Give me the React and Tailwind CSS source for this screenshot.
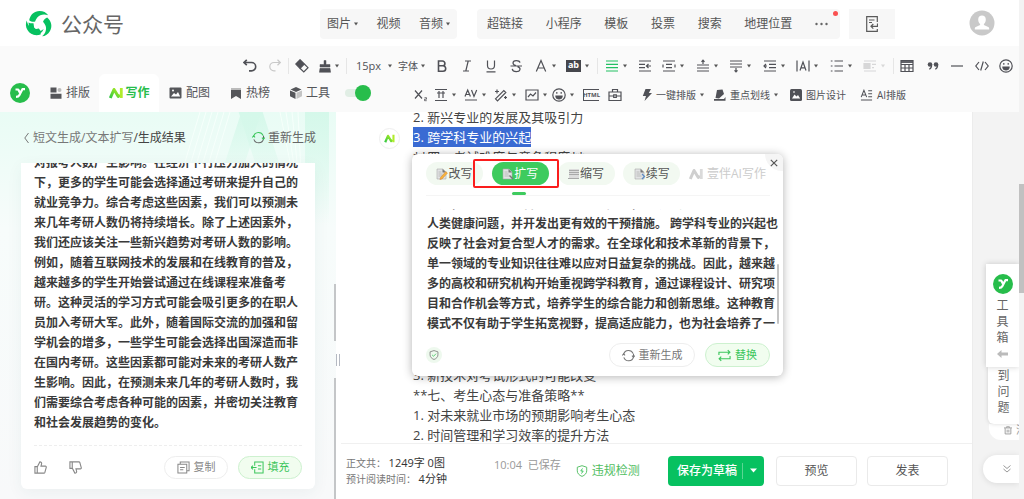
import { useState } from 'react';

const leftLines = [
    '对报考人数产生影响。在经济下行压力加大的情况',
    '下，更多的学生可能会选择通过考研来提升自己的',
    '就业竞争力。综合考虑这些因素，我们可以预测未',
    '来几年考研人数仍将持续增长。除了上述因素外，',
    '我们还应该关注一些新兴趋势对考研人数的影响。',
    '例如，随着互联网技术的发展和在线教育的普及，',
    '越来越多的学生开始尝试通过在线课程来准备考',
    '研。这种灵活的学习方式可能会吸引更多的在职人',
    '员加入考研大军。此外，随着国际交流的加强和留',
    '学机会的增多，一些学生可能会选择出国深造而非',
    '在国内考研。这些因素都可能对未来的考研人数产',
    '生影响。因此，在预测未来几年的考研人数时，我',
    '们需要综合考虑各种可能的因素，并密切关注教育',
    '和社会发展趋势的变化。',
];

const popupLines = [
    '例如，医学与人工智能学科的交叉融合，有助于更全面地理解',
    '人类健康问题，并开发出更有效的干预措施。 跨学科专业的兴起也',
    '反映了社会对复合型人才的需求。在全球化和技术革新的背景下，',
    '单一领域的专业知识往往难以应对日益复杂的挑战。因此，越来越',
    '多的高校和研究机构开始重视跨学科教育，通过课程设计、研究项',
    '目和合作机会等方式，培养学生的综合能力和创新思维。这种教育',
    '模式不仅有助于学生拓宽视野，提高适应能力，也为社会培养了一',
];

/* ---------- icons ---------- */

function Icon({ children, className = 'w-[14px] h-[14px]', box = '0 0 14 14', width = 1.2 }) {
    return (
        <svg className={`shrink-0 ${className}`} viewBox={box} fill="none" stroke="currentColor" strokeWidth={width} aria-hidden="true">
            {children}
        </svg>
    );
}

function Caret({ className = 'text-[#555]' }) {
    return (
        <svg className={`w-1 h-1 shrink-0 ${className}`} viewBox="0 0 4 4" aria-hidden="true">
            <path d="M0 .5h4L2 3.5z" fill="currentColor" />
        </svg>
    );
}

const swirlArm = 'M4.200 10.200C5.200 4.600 9.400 1 14.500 1c3.800 0 6.800 1.500 8.700 4.200-4.200-1.700-8.600-.6-10.900 2.200-1 1.200-1.800 2.600-2.200 4.200-2 .5-4.200-.1-5.900-1.400z';

function BrandLogo() {
    return (
        <svg className="w-7 h-7" viewBox="0 0 28 28" aria-hidden="true">
            <g fill="#07c160">
                <path d={swirlArm} />
                <path d={swirlArm} transform="rotate(120 14 14)" />
                <path d={swirlArm} transform="rotate(240 14 14)" />
                <path d="M3.500 12.500c2 1 3.500 1 5 .7l.6 4.300 3.400 3-4 3.500-4-3z" />
                <path d="M6.500 16.500l1.200 4.800 3-1.400c2.500 1.600 5.500 1.200 8-1-1.800 4.600-6 6.600-10 5.300-3.200-1.200-4.700-4-2.200-7.700z" />
            </g>
        </svg>
    );
}

function GreenBadge() {
    return (
        <svg className="w-5 h-5 shrink-0" viewBox="0 0 20 20" aria-hidden="true">
            <circle cx="10" cy="10" r="10" fill="#27bd4b" />
            <path d="M5.500 6.500h2.700l2 3.600M15 6.200h-2.600L9.300 12.300c-.6 1.200-1.600 1.600-3.300 1.600" fill="none" stroke="#fff" strokeWidth="2.200" strokeLinejoin="round" />
        </svg>
    );
}

function AiMark({ className = 'w-[14px] h-[12px]', gray = false }) {
    return (
        <svg className={`shrink-0 ${className}`} viewBox="0 0 14 12" fill="none" strokeLinejoin="round" aria-hidden="true">
            <defs>
                <linearGradient id="aiMark" x1="0" x2="1" y1="1" y2="0">
                    <stop offset="0" stopColor="#32c846" />
                    <stop offset="1" stopColor="#b4ee1c" />
                </linearGradient>
            </defs>
            <path d="M1.300 11 5 2.500 9.300 9.500 11 8" stroke={gray ? '#cfcfcf' : 'url(#aiMark)'} strokeWidth="3" />
            <path d="M12.300 1v10" stroke={gray ? '#dadada' : '#b0ec2b'} strokeWidth="2.800" />
        </svg>
    );
}

function Refresh({ tint = 'currentColor' }) {
    return (
        <Icon className="w-[13px] h-[13px]" width={1.100}>
            <path d="M1.800 5.600A5.400 5.400 0 0 1 12 5" stroke={tint} />
            <path d="M12.400 5.200v3.200a5.400 5.400 0 0 1-10.400.6" />
            <path d="M.3 6.900 1.800 5.200l1.500 1.700M10.700 7.100l1.600 1.700 1.500-1.700" stroke={tint} />
        </Icon>
    );
}

function Lines({ d }) {
    return (
        <Icon>
            <path d={d} />
        </Icon>
    );
}

function Smile() {
    return (
        <Icon>
            <circle cx="7" cy="7" r="6.200" />
            <path d="M3.500 7.800h7a3.500 3.500 0 0 1-7 0z" fill="currentColor" strokeWidth=".5" />
            <path d="M4.800 4v1.800M9.200 4v1.800" />
        </Icon>
    );
}

function Shield({ className = 'w-3 h-3', bolt = false }) {
    return (
        <Icon className={className} width={1.100}>
            <path d="M7 .8 12.500 2.600v4.200c0 3-2.200 5.200-5.500 6.500C3.700 12 1.500 9.800 1.500 6.800V2.600z" />
            <path d={bolt ? 'M7.600 4 5.600 7h2.800l-2 3' : 'M4.300 6.800l2.100 2 3.400-3.600'} stroke="#3cc65c" />
        </Icon>
    );
}

const NoteIcon = ({ kind }) => (
    <svg className="w-3 h-3 shrink-0" viewBox="0 0 12 12" aria-hidden="true">
        {kind === 'lines' ? (
            <>
                <path d="M1 1h10v10H1z" fill="#dcdcdc" />
                <path d="M1 2.500h10M1 4.500h10M1 6.500h10M0 10.500h11" stroke="#a9a9a9" />
            </>
        ) : (
            <>
                <path d="M1 1h6l3 3v7H1z" fill="#e2e3e4" stroke="#aaa" strokeWidth=".6" />
                <path d="M6.500 1v3.500H10z" fill="#777" />
                <path d="M2.500 4h3M2.500 6h4M2.500 8h5" stroke="#aaa" strokeWidth=".7" />
            </>
        )}
        {kind === 'pencil' && <path d="M4.500 9.500 9.800 3.600l1.700 1.500-5.400 5.800-2.200.7z" fill="#f7b43c" stroke="#c9702a" strokeWidth=".4" />}
        {kind === 'page' && <path d="M7.500 7.500l3.500 3.500" stroke="#777" strokeWidth="1.400" />}
        {kind === 'next' && <path d="M8 6l2.500 2.500L8 11" stroke="#5f8cc4" fill="none" strokeWidth="1.300" />}
    </svg>
);

/* ---------- toolbar ---------- */

function Tool({ label, className, caret = false, children }) {
    return (
        <button type="button" aria-label={label} className={`flex items-center shrink-0 gap-1 h-4 ${className}`}>
            {children}
            {caret && <Caret />}
        </button>
    );
}

function Divider({ className }) {
    return (
        <span className={`shrink-0 ${className}`}>
            <span className="block w-px h-4 bg-[#e6e6e6]" />
        </span>
    );
}

function FormatRow() {
    return (
        <div className="flex items-center h-7 pt-3 pl-[243px] text-[#505157]">
            <Tool label="撤销" className="w-[25px]">
                <Icon width={1.600}><path d="M1 3.500h7.500a4.200 4.200 0 0 1 0 8.400H6M3.800.8 1 3.500l2.800 2.700" /></Icon>
            </Tool>
            <Tool label="重做" className="w-5 text-[#c8c8c8]">
                <Icon><path d="M12 3.500H6a4.200 4.200 0 0 0 0 8.400h1.500M9.500.8l2.800 2.700-2.800 2.700" /></Icon>
            </Tool>
            <Divider className="w-[7px]" />
            <Tool label="清除格式" className="w-6">
                <Icon>
                    <path d="M5 .8 9.300 5 5 9.300.8 5z" fill="currentColor" />
                    <path d="M9.300 5 13 8.700 8.800 13 5 9.300" />
                </Icon>
            </Tool>
            <Tool label="格式刷" className="w-[27px]" caret>
                <Icon className="w-3 h-[14px]" box="0 0 12 14">
                    <path d="M5 1.500h2v4h4v2.500H1V5.500h4zM1 9.300h10l.6 4H.4z" fill="currentColor" strokeWidth=".5" />
                </Icon>
            </Tool>
            <Divider className="w-[10px]" />
            <div className="flex items-center shrink-0 w-[42px] gap-1">
                <select aria-label="字号" className="appearance-none bg-transparent text-[11px] leading-4 w-7 outline-none">
                    <option>15px</option>
                </select>
                <Caret />
            </div>
            <div className="flex items-center shrink-0 w-[37px] gap-px">
                <select aria-label="字体" className="appearance-none bg-transparent text-[10px] leading-4 w-[22px] outline-none">
                    <option>字体</option>
                </select>
                <Caret />
            </div>
            <Tool label="加粗" className="w-[25px]">
                <Icon width={1.600}><path d="M3.500 2h4a2.400 2.400 0 0 1 0 4.800h-4zM3.500 6.800H8a2.700 2.700 0 0 1 0 5.400H3.500z" /></Icon>
            </Tool>
            <Tool label="斜体" className="w-6"><Lines d="M5 2h6M3 12h6M8.200 2 5.800 12" /></Tool>
            <Tool label="下划线" className="w-[25px]"><Lines d="M3.500 1.500v5a3.500 3.500 0 0 0 7 0v-5M2.500 12.800h9" /></Tool>
            <Tool label="删除线" className="w-[25px]">
                <Lines d="M11 3.600C10.300 1 4 .8 4 4c0 1.500 1.500 2.200 3 2.600M1.500 7h11.500M8.500 7.600c4 1.200 3 5-1.300 5-2.300 0-3.700-1-4-2.700" />
            </Tool>
            <Tool label="文字颜色" className="w-8" caret><Lines d="M2.300 12.500 7 1.500l4.700 11M4 9h6" /></Tool>
            <Tool label="背景颜色" className="w-[31px]" caret>
                <span className="w-[15px] h-3 bg-[#45464c] text-white text-[9px] leading-[10px] font-bold text-center">ab</span>
            </Tool>
            <Divider className="w-2" />
            <Tool label="两端对齐" className="w-[33px] text-[#23c063]" caret><Lines d="M1 2h12M1 5.300h12M1 8.700h12M1 12h12" /></Tool>
            <Tool label="右缩进" className="w-6"><Lines d="M1 2h12M1 5.300h6M1 8.700h6M1 12h12M8.500 7h4.500M10.500 5 8.500 7l2 2" /></Tool>
            <Tool label="字间距" className="w-[34px]" caret><Lines d="M1 2h12M4 5.300h6M4 8.700h6M1 12h12M1 5.500v3M13 5.500v3" /></Tool>
            <Tool label="段前距" className="w-[33px]" caret><Lines d="M1 6h12M1 9h12M1 12h12M7 5V1M5.500 2.800 7 1.200l1.500 1.600" /></Tool>
            <Tool label="段后距" className="w-[34px]" caret><Lines d="M1 2h12M1 5h12M1 8h12M7 9v4M5.500 11.300 7 12.800l1.500-1.500" /></Tool>
            <Tool label="缩进" className="w-[33px]" caret><Lines d="M1 2h12M6 5.300h7M6 8.700h7M1 12h12M1 7h3M3 5 1 7l2 2" /></Tool>
            <Tool label="两端缩进" className="w-[34px]" caret><Lines d="M1 1.500v11M13 1.500v11M4 11.500l3-8.500 3 8.500M5 8.800h4" /></Tool>
            <Tool label="列表" className="w-[33px]" caret><Lines d="M4.500 2H13M4.500 7H13M4.500 12H13M.8 2h1.700M.8 7h1.700M.8 12h1.700" /></Tool>
            <Tool label="图文环绕" className="w-[30px] opacity-20" caret>
                <Icon><path d="M1 2h12M9 5.300h4M9 8.700h2M1 12h12" /><path d="M1 4.500h6v5H1z" fill="currentColor" /></Icon>
            </Tool>
            <Divider className="w-[7px]" />
            <Tool label="表格" className="w-[26px]">
                <Icon><path d="M1 1.500h12v11H1zM1 5.500h12M1 9h12M5 5.500v7M9 5.500v7" /><path d="M1 3h12" strokeWidth="1.800" /></Icon>
            </Tool>
            <Tool label="引用" className="w-6">
                <Icon>
                    <circle cx="4" cy="5.500" r="2.300" fill="currentColor" stroke="none" />
                    <circle cx="10" cy="5.500" r="2.300" fill="currentColor" stroke="none" />
                    <path d="M5.600 5.500c.2 2.500-.6 4-2.300 4.800M11.600 5.500c.2 2.500-.6 4-2.300 4.800" />
                </Icon>
            </Tool>
            <Tool label="分割线" className="w-[25px]"><Lines d="M1 7h12" /></Tool>
            <Tool label="代码" className="w-6"><Lines d="M4 3 .8 7 4 11M10 3l3.200 4L10 11M8.300 2.500 5.700 11.500" /></Tool>
            <Tool label="表情" className="w-4"><Smile /></Tool>
        </div>
    );
}

function TextTool({ className, text, caret, children }) {
    return (
        <button type="button" className={`flex items-center shrink-0 gap-1 text-[10px] leading-4 whitespace-nowrap ${className}`}>
            {children}
            <span>{text}</span>
            {caret && <Caret />}
        </button>
    );
}

function InsertRow() {
    return (
        <div className="flex items-center h-full pt-1 text-[#505157] text-xs">
            <Tool label="下标" className="w-5"><Icon><path d="M1 2.500l7 8M8 2.500l-7 8" /><path d="M10.500 9.700h2v1.500h-2v1.500h2.200" strokeWidth=".8" /></Icon></Tool>
            <Tool label="上下间距" className="w-[30px]" caret><Lines d="M1 1.500h12M1 12.500h12M3 5h8M5 3v7M9 3v7" /></Tool>
            <Tool label="字距" className="w-[30px]" caret><Lines d="M1 8.500 3.700 2l2.700 6.500M2 6.500h3.500M7.500 2l2.500 6.500L12.700 2M1 12h12" /></Tool>
            <Tool label="魔法棒" className="w-[31px]" caret><Lines d="M1.500 10.800 9.800 2.500l2 2-8.300 8.300zM3 1.500v4M1 3.500h4M11.500 8v3M10 9.500h3" /></Tool>
            <Tool label="插入图片" className="w-[27px]" caret>
                <Icon><path d="M1 2h12v10H1zM3 9l2.500-3 2.500 2 3-3.500" /></Icon>
            </Tool>
            <Tool label="插入表情" className="w-[31px]" caret><Smile /></Tool>
            <Tool label="HTML" className="w-[25px]">
                <span className="flex items-center justify-center w-4 h-3 border-y border-l border-current text-[6px] leading-[6px] font-bold">HTML</span>
            </Tool>
            <Tool label="素材" className="w-[34px]"><Lines d="M1 4h12v8.500H1zM4.500 4V1.500h5V4M1 8h4.500M8.500 8H13M5.700 6.800h2.600v2.500H5.700z" /></Tool>
            <TextTool text="一键排版" className="w-[72px]" caret>
                <Icon className="w-[10px] h-3" box="0 0 10 12"><path d="M3.500 0H9L6.800 4H10L2.500 12l1.500-5H.8z" fill="currentColor" stroke="none" /></Icon>
            </TextTool>
            <TextTool text="重点划线" className="w-[76px]" caret>
                <Icon className="w-3 h-3" box="0 0 12 12"><path d="M3 1l5.500-.5L10 5 5 9.500 1.500 9zM0 10h10l1.500-2v3.800H0z" fill="currentColor" stroke="none" /></Icon>
            </TextTool>
            <TextTool text="图片设计" className="w-[70px]">
                <Icon className="w-3 h-3" box="0 0 12 12">
                    <rect width="12" height="12" rx="1.500" fill="currentColor" stroke="none" />
                    <path d="M2 9.500 4.500 5.500l2 2L8 6l2.200 3.500z" fill="#fff" stroke="none" />
                    <path d="M3 3h2" stroke="#fff" />
                </Icon>
            </TextTool>
            <TextTool text="AI排版">
                <Icon className="w-[13px] h-3"><path d="M.8 9.500 4 1.500l3.200 8M2 7h4M9 2h4.500M9 5.500h4.500M9 9h4.500M.5 12.800h13" /></Icon>
            </TextTool>
        </div>
    );
}

function SideTab({ text, className, children }) {
    return (
        <button type="button" className={`flex items-center gap-1 shrink-0 h-full text-xs text-[#55565a] ${className}`}>
            {children}
            {text}
        </button>
    );
}

function TabRow() {
    const [enabled, setEnabled] = useState(true);
    return (
        <div className="flex items-center shrink-0 w-[414px] h-full pl-[10px] text-[#45464c]">
            <GreenBadge />
            <SideTab text="排版" className="pl-5 pr-[9px]">
                <Icon className="w-3 h-3" box="0 0 12 12">
                    <path d="M.5.5h6v5h-6zM.5 6.700h11v5H.5z" fill="currentColor" stroke="none" />
                    <circle cx="9.500" cy="3" r="2" fill="#bbb" stroke="none" />
                </Icon>
            </SideTab>
            <button type="button" className="flex items-center justify-center gap-[3px] shrink-0 w-[60px] h-full rounded-t-md bg-white text-xs font-bold text-[#27bd4b]">
                <AiMark />
                写作
            </button>
            <SideTab text="配图" className="pl-[10px]">
                <Icon className="w-[13px] h-3" box="0 0 12 12">
                    <rect y=".5" width="12" height="11" rx="1" fill="currentColor" stroke="none" />
                    <path d="M1.500 9.500 4.500 6l2 1.500L8.500 5l2.200 4.500z" fill="#fff" stroke="none" />
                    <circle cx="3.500" cy="3.500" r="1" fill="#fff" stroke="none" />
                </Icon>
            </SideTab>
            <SideTab text="热榜" className="pl-5">
                <Icon className="w-3 h-3" box="0 0 12 12">
                    <path d="M1 1h10v2H1z" fill="#bbb" stroke="none" />
                    <path d="M1 3h10v9L6 9l-5 3z" fill="currentColor" stroke="none" />
                </Icon>
            </SideTab>
            <SideTab text="工具" className="pl-5">
                <Icon className="w-3 h-3" box="0 0 12 12">
                    <path d="M6 0l5.500 2.500L6 5 .5 2.500zM0 3.500l5.500 2.300V12L0 9.300z" fill="currentColor" stroke="none" />
                    <path d="M12 3.500 6.500 5.800V12L12 9.300z" fill="#c4c4c4" stroke="none" />
                </Icon>
            </SideTab>
            <label className="relative flex items-center ml-[15px] w-[26px] h-4 cursor-pointer">
                <input
                    type="checkbox"
                    aria-label="启用插件"
                    checked={enabled}
                    onChange={(e) => setEnabled(e.target.checked)}
                    className="peer appearance-none w-[26px] h-2 rounded-full bg-[#e1eee5]" />
                <span className="absolute left-0 w-4 h-4 rounded-full bg-[#bbb] peer-checked:left-[10px] peer-checked:bg-[#27bd4b]" />
            </label>
        </div>
    );
}

/* ---------- panels ---------- */

function Header() {
    return (
        <header className="flex items-start shrink-0 h-[46px] pt-[9px] bg-white text-xs text-[#555]">
            <div className="flex items-center shrink-0 w-[320px] h-[30px] pl-[25px] gap-2">
                <BrandLogo />
                <span className="text-[21px] leading-7 text-[#666]">公众号</span>
            </div>
            <nav className="flex items-center justify-between shrink-0 w-[137px] h-[30px] px-[7px] rounded-sm bg-[#f7f7f7]">
                <button type="button" className="flex items-center gap-[3px]">图片<Caret /></button>
                <button type="button">视频</button>
                <button type="button" className="flex items-center gap-[3px]">音频<Caret /></button>
            </nav>
            <nav className="relative flex items-center justify-between shrink-0 w-[363px] h-[30px] ml-5 pl-[10px] pr-3 rounded-sm bg-[#f7f7f7]">
                <button type="button">超链接</button>
                <button type="button">小程序</button>
                <button type="button">模板</button>
                <button type="button">投票</button>
                <button type="button">搜索</button>
                <button type="button">地理位置</button>
                <button type="button" aria-label="更多">
                    <svg className="w-[13px] h-1" viewBox="0 0 13 4" fill="#666" aria-hidden="true">
                        <circle cx="1.500" cy="2" r="1.200" /><circle cx="6.500" cy="2" r="1.200" /><circle cx="11.500" cy="2" r="1.200" />
                    </svg>
                </button>
                <span className="absolute right-0.5 top-0.5 w-[5px] h-[5px] rounded-full bg-[#fa5151]" />
            </nav>
            <button type="button" aria-label="返回旧版" className="flex items-center justify-center shrink-0 w-[46px] h-[30px] ml-[9px] bg-[#f7f7f7] text-[#5a5a5a]">
                <Icon className="w-3 h-4" box="0 0 12 16"><path d="M11.300 6V.7H.7v14.600h10.600V13M3 4h5.500M3 6.500h3M11.500 7.500v2.800H5M7.300 8 5 10.300l2.300 2.300" /></Icon>
            </button>
            <svg className="w-[26px] h-[26px] ml-auto mr-6 mt-px" viewBox="0 0 26 26" aria-label="头像">
                <circle cx="13" cy="13" r="12.500" fill="#c9c9c9" />
                <path d="M13 5.500c2.300 0 3.800 1.600 3.800 4 0 2-.8 3.700-1.900 4.500v1l4.300 1.900c.8.400 1 .8 1 1.800v.8H5.800v-.8c0-1 .2-1.400 1-1.800l4.300-1.900v-1c-1.100-.8-1.900-2.500-1.900-4.500 0-2.400 1.500-4 3.800-4z" fill="#fff" />
            </svg>
        </header>
    );
}

function ResultPanel() {
    return (
        <section className="relative flex flex-col shrink-0 w-[336px] overflow-hidden bg-linear-to-b from-[#e9fcf5] via-[#f7fcfb] via-30% to-[#f8f9fa]">
            {/* Soft light bands behind the heading */}
            <div className="absolute right-[86px] top-0 w-[20px] h-[70px] -skew-x-[18deg] bg-linear-to-b from-[#d5f8ea] to-transparent" />
            <div className="absolute right-[62px] top-0 w-[24px] h-[70px] skew-x-[18deg] bg-linear-to-b from-[#d5f8ea] to-transparent" />
            <div className="absolute right-[7px] top-0 w-6 h-[112px] bg-linear-to-b from-[#d5f8ea] to-transparent" />
            <svg className="absolute right-0 top-0 w-[160px] h-[60px]" viewBox="0 0 160 60" aria-hidden="true">
                <path d="M24 0 6 60M30 0 12 60M36 0 18 60M42 0 24 60M48 0 30 60M54 0 36 60M104 0l12 60M110 0l9 60M116 0l6 60M122 0l3 60" stroke="#f6fffb" strokeWidth="1" fill="none" />
            </svg>
            <div className="relative flex items-center shrink-0 h-[51px] pl-6 pr-5 text-xs text-[#777]">
                <Icon className="w-[5px] h-3 mr-1" box="0 0 5 12" width={1}><path d="M4.500 1 .8 6l3.700 5" /></Icon>
                <span>短文生成/文本扩写<span className="text-[#444]">/生成结果</span></span>
                <button type="button" className="flex items-center gap-[3px] ml-auto text-[#666]">
                    <Refresh tint="#3cc65c" />
                    重新生成
                </button>
            </div>
            <article className="relative flex flex-col flex-1 min-h-0 mx-[21px] mb-[10px] px-[13px] rounded-b-md bg-white shadow-[0_4px_16px_rgba(40,80,80,0.06)]">
                <div className="flex flex-col justify-end overflow-hidden text-xs leading-5 font-bold text-[#3a3a3a] h-[270px] whitespace-nowrap">
                    {leftLines.map((line) => <p key={line}>{line}</p>)}
                </div>
                <div className="flex items-center gap-[10px] mt-3 pt-[10px] border-t border-dashed border-[#eee] text-[#888] text-[11px]">
                    <button type="button" aria-label="赞">
                        <Icon className="w-[13px] h-[13px]" width={1.200}><path d="M1 6h2.500v7H1zM3.500 6.500 6.300 1c1.600 0 2.200 1 1.800 2.300L7.500 5.500h4.700c.8 0 1.200.6 1 1.300l-1.500 5.500c-.2.500-.5.700-1 .7H3.500" /></Icon>
                    </button>
                    <button type="button" aria-label="踩" className="ml-3">
                        <Icon className="w-[13px] h-[13px]" width={1.200}><path d="M1 1h2.500v7H1zM3.500 7.500 6.300 13c1.600 0 2.200-1 1.800-2.300L7.500 8.500h4.700c.8 0 1.200-.6 1-1.300l-1.500-5.500c-.2-.5-.5-.7-1-.7H3.500" /></Icon>
                    </button>
                    <button type="button" className="flex items-center justify-center gap-1 ml-auto w-16 h-[23px] rounded-full border border-[#eee]">
                        <Icon className="w-[13px] h-[13px]" width={1.100}><path d="M1 3.500h9.500V13H1zM3.500 3.500V1H13v9.500h-2.500M3.300 7h5M3.300 9.500h3.500" /></Icon>
                        复制
                    </button>
                    <button type="button" className="flex items-center justify-center gap-1 w-16 h-[23px] rounded-full border border-[#cdf1cf] bg-[#f1fdef] text-[#3cc65c]">
                        <Icon className="w-[13px] h-[13px]" width={1.100}><path d="M4 5V1h9v12H4V9M0 7h6M2.200 5 0 7l2.200 2M7.500 5H11M7.500 8.500H11" /></Icon>
                        填充
                    </button>
                </div>
            </article>
            <span className="absolute right-0 top-[172px] w-0.5 h-[57px] bg-[#c4c6c8]" />
            <span className="absolute right-0 top-[266px] bottom-0 w-0.5 bg-[#c4c6c8]" />
        </section>
    );
}

function Pill({ text, kind, className = 'bg-[#f2f9f1] text-[#555]' }) {
    return (
        <button type="button" className={`flex items-center justify-center shrink-0 w-[57px] h-[23px] rounded-full text-xs ${className}`}>
            <NoteIcon kind={kind} />
            {text}
        </button>
    );
}

function RewritePopup() {
    return (
        <div className="absolute left-[71px] top-[42px] w-[371px] rounded-md bg-white shadow-[0_1px_10px_rgba(0,0,0,0.3)] overflow-hidden">
            <div className="relative flex items-start justify-between h-[42px] ml-[14px] mr-[13px] pt-2 pr-1 border-b border-[#f5f5f5]">
                <Pill text="改写" kind="pencil" />
                <Pill text="扩写" kind="page" className="bg-[#3ecb5e] text-white" />
                <Pill text="缩写" kind="lines" />
                <Pill text="续写" kind="next" />
                <span className="flex items-center gap-1 h-[23px] text-xs text-[#ccc] whitespace-nowrap">
                    <AiMark gray />
                    壹伴AI写作
                </span>
                <span className="absolute left-[86px] bottom-0 w-[14px] h-[3px] rounded-full bg-[#3ecb5e]" />
                <span className="absolute left-[47px] top-[5px] w-[86px] h-[29px] border-2 border-[#fb1d1d] rounded-xs" />
            </div>
            <button type="button" aria-label="关闭" className="absolute right-0 top-0 flex items-center justify-center w-[18px] h-[17px] rounded-bl-full bg-[#f5f5f5] text-[#555]">
                <Icon className="w-2 h-2" box="0 0 8 8" width={1.200}><path d="M.8.8l6.400 6.400M7.200.8.8 7.200" /></Icon>
            </button>
            <div className="flex flex-col justify-end overflow-hidden h-[125px] mt-[13px] pl-[15px] text-xs leading-5 font-bold text-[#3a3a3a] whitespace-nowrap">
                {popupLines.map((line) => <p key={line}>{line}</p>)}
            </div>
            <span className="absolute right-1 top-[110px] w-0.5 h-[60px] rounded-full bg-[#c4c4c4]" />
            <div className="flex items-center gap-[10px] pl-[14px] pr-[13px] pt-[9px] pb-[9px] text-[11px] text-[#777]">
                <span className="flex items-center justify-center w-4 h-4 rounded-full bg-[#eef9ee]"><Shield className="w-[10px] h-[10px]" /></span>
                <button type="button" className="flex items-center justify-center gap-1 ml-auto w-[86px] h-6 rounded-full border border-[#eee]">
                    <Refresh />
                    重新生成
                </button>
                <button type="button" className="flex items-center justify-center gap-1 w-[65px] h-6 rounded-full border border-[#cdf1cf] bg-[#f1fdef] text-[#3cc65c]">
                    <Icon className="w-[13px] h-[13px]" width={1.200}><path d="M1 6.500v-3h11.500M10.500 1.200l2.300 2.300-2.300 2.300M13 7.500v3H1.500M3.500 8.200l-2.300 2.300 2.300 2.300" /></Icon>
                    替换
                </button>
            </div>
        </div>
    );
}

function Editor() {
    return (
        <main className="flex flex-col flex-1 min-w-0 bg-white">
            <div className="relative flex-1 min-h-0">
                <div className="h-full overflow-hidden pl-[72px] text-[13px] leading-5 text-[#444]">
                    <div className="-mt-[5px]">
                        <p>2. 新兴专业的发展及其吸引力</p>
                        <p><span className="inline-block bg-[#3a6bd3] text-white">3. 跨学科专业的兴起</span></p>
                        <p>**四、考试难度与竞争程度**</p>
                    </div>
                    <div className="mt-[198px]">
                        <p>3. 新技术对考试形式的可能改变</p>
                        <p>**七、考生心态与准备策略**</p>
                        <p>1. 对未来就业市场的预期影响考生心态</p>
                        <p>2. 时间管理和学习效率的提升方法</p>
                    </div>
                </div>
                <span className="absolute left-[38px] top-4 flex items-center justify-center w-[21px] h-[21px] rounded-full border border-[#eee] bg-white">
                    <AiMark className="w-[11px] h-[9px]" />
                </span>
                <RewritePopup />
            </div>
            <footer className="flex items-center shrink-0 h-[56px] pl-[5px] pr-6 pb-0.5 border-t border-[#f0f0f0] text-xs text-[#555]">
                <div className="w-[148px] text-[10px] leading-4 text-[#777]">
                    <p>正文共： <span className="text-[11px] text-[#333]">1249字 0图</span></p>
                    <p>预计阅读时间： <span className="text-[11px] text-[#333]">4分钟</span></p>
                </div>
                <div className="self-start pt-[13px] text-[11px] leading-4 text-[#999]">
                    10:04&nbsp; 已保存
                </div>
                <a href="#check" className="flex items-center gap-1 ml-[15px] text-[#52be62]">
                    <Shield bolt />
                    违规检测
                </a>
                <div className="flex items-center w-24 h-[30px] ml-auto rounded-sm bg-[#07c160] text-white font-medium">
                    <button type="button" className="flex-1 pl-1">保存为草稿</button>
                    <button type="button" aria-label="更多保存方式" className="flex items-center justify-center w-[22px] h-4 border-l border-[#5bd693]">
                        <svg className="w-[7px] h-[5px]" viewBox="0 0 7 5" aria-hidden="true"><path d="M0 .5h7L3.500 4.500z" fill="#fff" /></svg>
                    </button>
                </div>
                <button type="button" className="w-[81px] h-[30px] ml-3 rounded-sm border border-[#eaeaea]">预览</button>
                <button type="button" className="w-[81px] h-[30px] ml-[10px] rounded-sm border border-[#eaeaea]">发表</button>
            </footer>
        </main>
    );
}

function SideTools() {
    return (
        <aside className="flex flex-col items-end justify-end shrink-0 w-[47px] pb-4 bg-[#f3f3f3] border-l border-[#ececec] text-xs leading-4 text-[#666]">
            <div className="relative z-20 flex flex-col items-center w-[33px] h-[103px] pt-[10px] bg-white shadow-[0_0_6px_rgba(0,0,0,0.18)]">
                <GreenBadge />
                <button type="button" className="w-4 mt-1">工具箱</button>
                <Icon className="w-[11px] h-2 mt-1 text-[#bbb]" box="0 0 11 8"><path d="M0 4l4.500-4v2.500H11v3H4.500V8z" fill="currentColor" stroke="none" /></Icon>
            </div>
            <div className="relative z-10 flex justify-center w-[31px] h-[57px] rounded-bl-md bg-white shadow-[0_0_4px_rgba(0,0,0,0.15)]">
                <button type="button" className="w-3 pb-2">到问题</button>
            </div>
            <button type="button" className="flex items-center gap-1 w-[30px] h-4 pl-[15px] pb-1 rounded-bl-xl bg-white overflow-hidden text-[11px] text-[#999]">
                <Icon className="w-2 h-[9px]" width={1.600}><path d="M0 2.500h14M4.500 2V.5h5V2M2 3v10h10V3M5.500 5.500v5M8.500 5.500v5" /></Icon>
                清
            </button>
            <button type="button" aria-label="收起" className="flex items-center justify-center w-9 h-7 mt-[15px] pl-3 rounded-l-full bg-white shadow-[0_1px_6px_rgba(0,0,0,0.1)] text-[#999]">
                <Icon className="w-2 h-2" box="0 0 8 8" width={1}><path d="M.5.5 4 3.500 7.500.5M.5 4 4 7l3.500-3" /></Icon>
            </button>
        </aside>
    );
}

export default function App() {
    return (
        <div className="flex h-screen overflow-hidden bg-white font-['Open_Sans','Noto_Sans_CJK_SC',sans-serif]">
            <div className="flex flex-col flex-1 min-w-0 overflow-hidden">
                <Header />
                <div className="flex flex-col shrink-0 bg-[#fafafa]">
                    <FormatRow />
                    <div className="flex h-[38px]">
                        <TabRow />
                        <InsertRow />
                    </div>
                </div>
                <div className="flex flex-1 min-h-0">
                    <ResultPanel />
                    {/* Drag handle between the panels */}
                    <div className="shrink-0 w-[5px] pt-[242px] bg-white">
                        <span className="block w-1 h-3 border-x border-[#b5b9c2]" />
                    </div>
                    <Editor />
                    <SideTools />
                </div>
            </div>
            {/* Page scrollbar */}
            <div className="shrink-0 w-[5px] pt-[184px] bg-[#f3f3f3]">
                <div className="h-[109px] bg-[#c1c1c1]" />
            </div>
        </div>
    );
}
